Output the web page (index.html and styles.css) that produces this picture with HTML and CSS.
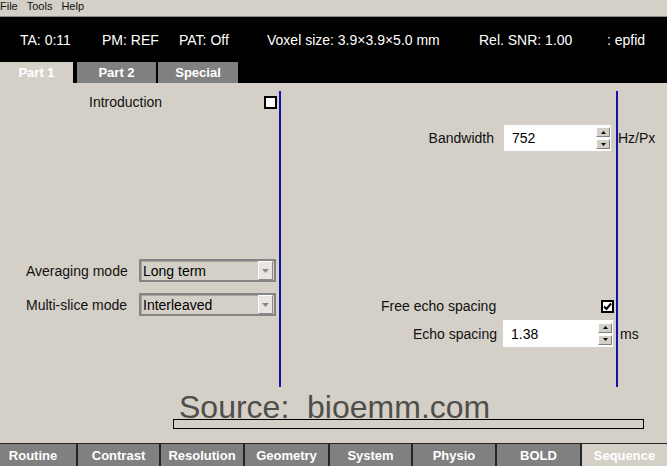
FILE: index.html
```html
<!DOCTYPE html>
<html>
<head>
<meta charset="utf-8">
<link rel="stylesheet" href="styles.css">
</head>
<body>
<div class="app">
  <div class="menubar">
    <span class="menu-first">File</span>
    <span>Tools</span>
    <span>Help</span>
  </div>
  <div class="status">
    <span>TA: 0:11</span>
    <span>PM: REF</span>
    <span>PAT: Off</span>
    <span>Voxel size: 3.9×3.9×5.0 mm</span>
    <span>Rel. SNR: 1.00</span>
    <span>: epfid</span>
  </div>
  <div class="toptabs">
    <div class="ttab active t1">Part 1</div>
    <div class="ttab t2">Part 2</div>
    <div class="ttab t3">Special</div>
  </div>
  <div class="content">
    <div class="columns">
      <div class="col col1">
        <div class="intro-row">
          <span class="lbl-grow">Introduction</span>
          <span class="cb"></span>
        </div>
        <div class="select-row avg">
          <span class="sel-lbl">Averaging mode</span>
          <div class="select">
            <span class="sel-val">Long term</span>
            <span class="sel-btn"><svg width="7" height="4" viewBox="0 0 7 4"><path d="M0 0H7L3.5 4Z" fill="#8a8a8a"/></svg></span>
          </div>
        </div>
        <div class="select-row multi">
          <span class="sel-lbl">Multi-slice mode</span>
          <div class="select">
            <span class="sel-val">Interleaved</span>
            <span class="sel-btn"><svg width="7" height="4" viewBox="0 0 7 4"><path d="M0 0H7L3.5 4Z" fill="#8a8a8a"/></svg></span>
          </div>
        </div>
      </div>
      <div class="col col2">
        <div class="num-row bw">
          <span class="num-lbl">Bandwidth</span>
          <div class="numbox">
            <span class="numval">752</span>
            <span class="spin">
              <span class="spin-btn"><svg width="5" height="3" viewBox="0 0 5 3"><path d="M0 3H5L2.5 0Z" fill="#000"/></svg></span>
              <span class="spin-btn"><svg width="5" height="3" viewBox="0 0 5 3"><path d="M0 0H5L2.5 3Z" fill="#000"/></svg></span>
            </span>
          </div>
          <span class="unit">Hz/Px</span>
        </div>
        <div class="check-row">
          <span class="lbl-grow">Free echo spacing</span>
          <span class="cb checked"><svg width="9" height="9" viewBox="0 0 9 9"><path d="M1 4.5L3.5 7L8 1.5" fill="none" stroke="#000" stroke-width="2"/></svg></span>
        </div>
        <div class="num-row es">
          <span class="num-lbl es-lbl">Echo spacing</span>
          <div class="numbox">
            <span class="numval">1.38</span>
            <span class="spin">
              <span class="spin-btn"><svg width="5" height="3" viewBox="0 0 5 3"><path d="M0 3H5L2.5 0Z" fill="#000"/></svg></span>
              <span class="spin-btn"><svg width="5" height="3" viewBox="0 0 5 3"><path d="M0 0H5L2.5 3Z" fill="#000"/></svg></span>
            </span>
          </div>
          <span class="unit">ms</span>
        </div>
      </div>
      <div class="col col3"></div>
    </div>
    <div class="watermark">Source:  bioemm.com</div>
    <div class="progress"></div>
  </div>
  <div class="btabs">
    <div class="btab routine">Routine</div>
    <div class="btab">Contrast</div>
    <div class="btab">Resolution</div>
    <div class="btab">Geometry</div>
    <div class="btab">System</div>
    <div class="btab">Physio</div>
    <div class="btab">BOLD</div>
    <div class="btab active">Sequence</div>
  </div>
</div>
</body>
</html>
```
FILE: styles.css
```css
* { box-sizing: border-box; }
html, body { margin: 0; padding: 0; }
body {
  width: 667px;
  height: 466px;
  overflow: hidden;
  background: #d4d0c8;
  font-family: "Liberation Sans", Arial, sans-serif;
  color: #111;
}
.app { display: flex; flex-direction: column; height: 466px; }

.menubar {
  height: 17px;
  border-bottom: 1px solid #8a8a8a;
  display: flex;
  gap: 9px;
  font-size: 11px;
  line-height: 12px;
}
.menu-first { margin-left: 0; }

.status {
  height: 45px;
  background: #000;
  color: #fff;
  display: grid;
  grid-template-columns: 82px 77px 88px 212px 128px auto;
  align-items: center;
  padding-left: 20px;
  font-size: 14px;
}

.toptabs { height: 21px; background: #000; display: flex; }
.ttab {
  height: 21px;
  background: #808080;
  color: #fff;
  font-weight: bold;
  font-size: 13px;
  display: flex;
  align-items: center;
  justify-content: center;
}
.ttab.active { background: #d4d0c8; }
.t1 { width: 73px; }
.t2 { width: 79px; margin-left: 4px; }
.t3 { width: 80px; margin-left: 2px; }

.content { flex: 1; display: flex; flex-direction: column; }
.columns { display: flex; margin-top: 8px; height: 296px; }
.col1 { width: 281px; flex-shrink: 0; border-right: 2px solid #1212a6; }
.col2 { width: 337px; flex-shrink: 0; border-right: 2px solid #1212a6; }
.col { font-size: 14px; }

.intro-row {
  display: flex;
  align-items: center;
  height: 20px;
  margin-top: 1px;
  padding-left: 89px;
  padding-right: 2px;
}
.lbl-grow { flex: 1; }
.cb {
  width: 13px;
  height: 13px;
  flex-shrink: 0;
  border: 2px solid #000;
  background: #fff;
  display: flex;
  align-items: center;
  justify-content: center;
}

.select-row { display: flex; align-items: center; padding-left: 26px; height: 23px; }
.select-row.avg { margin-top: 147px; }
.select-row.multi { margin-top: 11px; }
.sel-lbl { width: 113px; flex-shrink: 0; }
.select {
  width: 137px;
  height: 23px;
  flex-shrink: 0;
  border: 2px solid #858585;
  box-shadow: inset 1px 1px 0 #a8a6a0;
  display: flex;
  align-items: center;
}
.sel-val { flex: 1; padding-left: 2px; color: #000; }
.sel-btn {
  width: 15px;
  height: 19px;
  margin-right: 1px;
  background: #e8e6e0;
  border-top: 1px solid #fff;
  border-left: 1px solid #fff;
  border-right: 1px solid #8a8a8a;
  border-bottom: 1px solid #8a8a8a;
  display: flex;
  align-items: center;
  justify-content: center;
}

.num-row { display: flex; align-items: center; height: 26px; }
.num-row > * { flex-shrink: 0; }
.num-row.bw { margin-top: 34px; }
.num-row.es { margin-top: 4px; height: 27px; }
.num-lbl { width: 213px; text-align: right; }
.es-lbl { width: 216px; }
.numbox {
  margin-left: 10px;
  width: 107px;
  height: 100%;
  background: #fff;
  display: flex;
  align-items: center;
}
.es .numbox { margin-left: 6px; width: 110px; }
.numval { flex: 1; padding-left: 8px; color: #000; }
.spin { width: 14px; display: flex; flex-direction: column; gap: 2px; margin-right: 1px; }
.spin-btn {
  height: 10px;
  background: #d4d0c8;
  border-top: 1px solid #fff;
  border-left: 1px solid #fff;
  border-right: 1px solid #808080;
  border-bottom: 1px solid #808080;
  display: flex;
  align-items: center;
  justify-content: center;
}
.unit { margin-left: 7px; }

.check-row {
  display: flex;
  align-items: center;
  height: 20px;
  margin-top: 145px;
  padding-left: 100px;
  padding-right: 2px;
}

.watermark {
  margin-top: 5px;
  height: 27px;
  padding-left: 179px;
  font-size: 32px;
  line-height: 31px;
  color: #4f4e4a;
  white-space: pre;
  position: relative;
  z-index: 1;
}
.progress {
  margin-left: 173px;
  width: 471px;
  height: 10px;
  border: 1px solid #000;
}

.btabs {
  height: 23px;
  background: #262626;
  display: grid;
  grid-template-columns: 76px 81px 82px 83px 81px 82px 83px 1fr;
  column-gap: 2px;
  padding-top: 1px;
}
.btab {
  background: #808080;
  color: #fff;
  font-weight: bold;
  font-size: 13px;
  display: flex;
  align-items: center;
  justify-content: center;
}
.btab.routine { padding-right: 10px; }
.btab.active { background: #d4d0c8; }
```
